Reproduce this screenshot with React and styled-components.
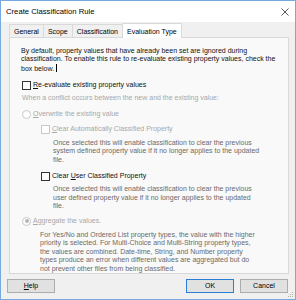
import React from 'react';
import styled, { createGlobalStyle } from 'styled-components';

const Global = createGlobalStyle`
  html, body { margin: 0; padding: 0; background: #ffffff; }
  body { font-family: "Liberation Sans", Arial, sans-serif; }
  * { box-sizing: border-box; }
`;

const Window = styled.div`
  position: relative;
  width: 296px;
  height: 300px;
  border: 1px solid #78a9dc;
  display: flex;
  flex-direction: column;
  background: #f0f0f0;
  font-family: "Liberation Sans", Arial, sans-serif;
`;

const TitleBar = styled.div`
  height: 21px;
  flex: none;
  background: #ffffff;
  display: flex;
  align-items: center;
  justify-content: space-between;
  padding: 0 6px 0 5px;
`;

const Title = styled.span`
  font-size: 7.7px;
  color: #000;
  white-space: nowrap;
`;

const Body = styled.div`
  flex: 1;
  display: flex;
  flex-direction: column;
  padding: 1px 6px 0 8px;
  min-height: 0;
`;

const TabStrip = styled.div`
  height: 14px;
  flex: none;
  display: flex;
  align-items: flex-end;
`;

const Tab = styled.div`
  height: ${(p) => (p.$active ? 15 : 13)}px;
  margin-bottom: ${(p) => (p.$active ? -1 : 0)}px;
  margin-right: -1px;
  padding: 0 4px;
  display: flex;
  align-items: center;
  justify-content: center;
  font-size: 7px;
  color: #000;
  white-space: nowrap;
  background: ${(p) => (p.$active ? '#ffffff' : '#f0f0f0')};
  border: 1px solid #d9d9d9;
  border-bottom: none;
  position: relative;
  z-index: ${(p) => (p.$active ? 2 : 1)};
`;

const Panel = styled.div`
  flex: 1;
  background: #f9f9f9;
  border: 1px solid #d9d9d9;
  padding: 8.75px 0 0 11px;
  display: flex;
  flex-direction: column;
  align-items: flex-start;
  position: relative;
  z-index: 0;
`;

const Text = styled.div`
  font-size: 7px;
  line-height: 8.5px;
  white-space: nowrap;
  color: ${(p) => p.$color || '#111'};
  margin-top: ${(p) => p.$mt || 0}px;
  margin-left: ${(p) => p.$indent || 0}px;
`;

const Caret = styled.span`
  display: inline-block;
  width: 1px;
  height: 8px;
  background: #000;
  margin-left: 2px;
  vertical-align: -1px;
`;

const Row = styled.div`
  height: 10px;
  display: flex;
  align-items: center;
  margin-top: ${(p) => p.$mt || 0}px;
  margin-left: ${(p) => p.$indent || 0}px;
`;

const CheckBox = styled.span`
  width: 9px;
  height: 9px;
  flex: none;
  border: 1px solid ${(p) => (p.$disabled ? '#c8c8c8' : '#333333')};
  background: #ffffff;
`;

const Radio = styled.span`
  width: 9px;
  height: 9px;
  flex: none;
  border-radius: 50%;
  border: 1px solid #c8c8c8;
  background: #ffffff;
  display: flex;
  align-items: center;
  justify-content: center;
  &::after {
    content: '';
    display: ${(p) => (p.$checked ? 'block' : 'none')};
    width: 4px;
    height: 4px;
    border-radius: 50%;
    background: #b5b5b5;
  }
`;

const Label = styled.span`
  font-size: 7px;
  line-height: 8.5px;
  margin-left: 2px;
  white-space: nowrap;
  color: ${(p) => (p.$disabled ? '#a8a8a8' : '#111')};
`;

const Mn = styled.span`
  text-decoration: underline;
  text-underline-offset: 1px;
  text-decoration-thickness: 0.6px;
`;

const ButtonRow = styled.div`
  height: 28px;
  flex: none;
  display: flex;
  justify-content: space-between;
  align-items: flex-start;
  padding-top: 5px;
  margin: 0 1px 0 -2px;
`;

const ButtonGroup = styled.div`
  display: flex;
  gap: 6px;
`;

const Button = styled.button`
  width: 48px;
  height: 14px;
  padding: 0;
  margin: 0;
  font-family: "Liberation Sans", Arial, sans-serif;
  font-size: 7px;
  line-height: 12px;
  color: #000;
  background: #e1e1e1;
  border: 1px solid ${(p) => (p.$primary ? '#2a7dd3' : '#adadad')};
  display: flex;
  align-items: center;
  justify-content: center;
`;

const Grip = styled.svg`
  position: absolute;
  right: 1px;
  bottom: 1px;
`;

const DESC = '#6a6a6a';
const DIS = '#a8a8a8';

export default function App() {
  return (
    <>
      <Global />
      <Window>
        <TitleBar>
          <Title>Create Classification Rule</Title>
          <svg width="8" height="8" viewBox="0 0 8 8">
            <path d="M0.5 0.5 L7.5 7.5 M7.5 0.5 L0.5 7.5" stroke="#2b2b2b" strokeWidth="0.8" />
          </svg>
        </TitleBar>
        <Body>
          <TabStrip>
            <Tab>General</Tab>
            <Tab>Scope</Tab>
            <Tab>Classification</Tab>
            <Tab $active>Evaluation Type</Tab>
          </TabStrip>
          <Panel>
            <Text>
              By default, property values that have already been set are ignored during
              <br />
              classification. To enable this rule to re-evaluate existing property values, check the
              <br />
              box below.
              <Caret />
            </Text>
            <Row $mt={6.75} $indent={1}>
              <CheckBox />
              <Label>
                <Mn>R</Mn>e-evaluate existing property values
              </Label>
            </Row>
            <Text $mt={3.75} $indent={1} $color={DIS}>
              When a conflict occurs between the new and the existing value:
            </Text>
            <Row $mt={6.75} $indent={1}>
              <Radio />
              <Label $disabled>
                <Mn>O</Mn>verwrite the existing value
              </Label>
            </Row>
            <Row $mt={5} $indent={20}>
              <CheckBox $disabled />
              <Label $disabled>
                <Mn>C</Mn>lear Automatically Classified Property
              </Label>
            </Row>
            <Text $mt={4.75} $indent={32} $color={DESC}>
              Once selected this will enable classification to clear the previous
              <br />
              system defined property value if it no longer applies to the updated
              <br />
              file.
            </Text>
            <Row $mt={6.75} $indent={20}>
              <CheckBox />
              <Label>
                Clear <Mn>U</Mn>ser Classified Property
              </Label>
            </Row>
            <Text $mt={4.25} $indent={32} $color={DESC}>
              Once selected this will enable classification to clear the previous
              <br />
              user defined property value if it no longer applies to the updated
              <br />
              file.
            </Text>
            <Row $mt={5.25} $indent={1}>
              <Radio $checked />
              <Label $disabled>
                <Mn>A</Mn>ggregate the values.
              </Label>
            </Row>
            <Text $mt={4.75} $indent={19} $color={DESC}>
              For Yes/No and Ordered List property types, the value with the higher
              <br />
              priority is selected. For Multi-Choice and Multi-String property types,
              <br />
              the values are combined. Date-time, String, and Number property
              <br />
              types produce an error when different values are aggregated but do
              <br />
              not prevent other files from being classified.
            </Text>
          </Panel>
          <ButtonRow>
            <Button>
              <Mn>H</Mn>elp
            </Button>
            <ButtonGroup>
              <Button $primary>OK</Button>
              <Button>Cancel</Button>
            </ButtonGroup>
          </ButtonRow>
        </Body>
        <Grip width="6" height="6" viewBox="0 0 6 6">
          <rect x="4" y="0" width="1" height="1" fill="#b0b0b0" />
          <rect x="2" y="2" width="1" height="1" fill="#b0b0b0" />
          <rect x="4" y="2" width="1" height="1" fill="#b0b0b0" />
          <rect x="0" y="4" width="1" height="1" fill="#b0b0b0" />
          <rect x="2" y="4" width="1" height="1" fill="#b0b0b0" />
          <rect x="4" y="4" width="1" height="1" fill="#b0b0b0" />
        </Grip>
      </Window>
    </>
  );
}
